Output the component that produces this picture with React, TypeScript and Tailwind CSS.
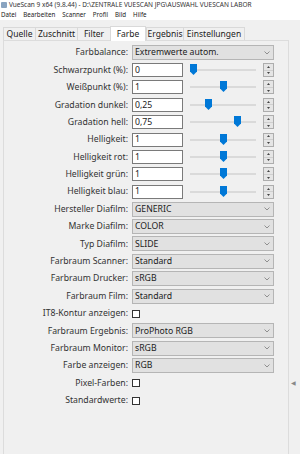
import React from "react";

type Row =
  | { kind: "dropdown"; label: string; value: string }
  | { kind: "slider"; label: string; value: string; pos: number }
  | { kind: "check"; label: string };

const rows: Row[] = [
  { kind: "dropdown", label: "Farbbalance:", value: "Extremwerte autom." },
  { kind: "slider", label: "Schwarzpunkt (%):", value: "0", pos: 3 },
  { kind: "slider", label: "Weißpunkt (%):", value: "1", pos: 33 },
  { kind: "slider", label: "Gradation dunkel:", value: "0,25", pos: 18 },
  { kind: "slider", label: "Gradation hell:", value: "0,75", pos: 47 },
  { kind: "slider", label: "Helligkeit:", value: "1", pos: 33 },
  { kind: "slider", label: "Helligkeit rot:", value: "1", pos: 33 },
  { kind: "slider", label: "Helligkeit grün:", value: "1", pos: 33 },
  { kind: "slider", label: "Helligkeit blau:", value: "1", pos: 33 },
  { kind: "dropdown", label: "Hersteller Diafilm:", value: "GENERIC" },
  { kind: "dropdown", label: "Marke Diafilm:", value: "COLOR" },
  { kind: "dropdown", label: "Typ Diafilm:", value: "SLIDE" },
  { kind: "dropdown", label: "Farbraum Scanner:", value: "Standard" },
  { kind: "dropdown", label: "Farbraum Drucker:", value: "sRGB" },
  { kind: "dropdown", label: "Farbraum Film:", value: "Standard" },
  { kind: "check", label: "IT8-Kontur anzeigen:" },
  { kind: "dropdown", label: "Farbraum Ergebnis:", value: "ProPhoto RGB" },
  { kind: "dropdown", label: "Farbraum Monitor:", value: "sRGB" },
  { kind: "dropdown", label: "Farbe anzeigen:", value: "RGB" },
  { kind: "check", label: "Pixel-Farben:" },
  { kind: "check", label: "Standardwerte:" },
];

function Chevron() {
  return (
    <svg width="6" height="4" viewBox="0 0 6 4" className="mr-[3px]">
      <path d="M0.5 0.5 L3 3 L5.5 0.5" fill="none" stroke="#7a7a7a" strokeWidth="0.8" />
    </svg>
  );
}

function Thumb() {
  return (
    <svg width="7" height="11" viewBox="0 0 7 11">
      <path d="M0 0 H7 V7.5 L3.5 11 L0 7.5 Z" fill="#0078d7" />
    </svg>
  );
}

function Spin() {
  return (
    <div className="flex h-[14px] w-[11px] flex-col border border-[#adadad] bg-[#e5e5e5]">
      <div className="flex flex-1 items-center justify-center border-b border-[#cfcfcf]">
        <svg width="3" height="2" viewBox="0 0 3 2">
          <path d="M0 2 L1.5 0 L3 2 Z" fill="#444" />
        </svg>
      </div>
      <div className="flex flex-1 items-center justify-center">
        <svg width="3" height="2" viewBox="0 0 3 2">
          <path d="M0 0 L1.5 2 L3 0 Z" fill="#444" />
        </svg>
      </div>
    </div>
  );
}

function RowView({ row }: { row: Row }) {
  return (
    <div className="flex h-[17.4px] items-center">
      <div className="w-[125px] pr-[1px] text-right text-[#333]">{row.label}</div>
      <div className="ml-[3px] flex items-center text-[#222]">
        {row.kind === "dropdown" && (
          <div className="flex h-[15px] w-[142px] items-center justify-between border border-[#b5b5b5] bg-[#e1e1e1] pl-[2px]">
            <span>{row.value}</span>
            <Chevron />
          </div>
        )}
        {row.kind === "slider" && (
          <>
            <div className="flex h-[14px] w-[51px] items-center border border-[#7a7a7a] bg-white pl-[2px]">
              {row.value}
            </div>
            <div className="relative h-[14px] w-[80px]">
              <div className="absolute left-[7px] top-[6px] h-[2px] w-[66px] bg-[#dadada]" />
              <div
                className="absolute top-[1px]"
                style={{ left: 7 + row.pos - 3.5 }}
              >
                <Thumb />
              </div>
            </div>
            <Spin />
          </>
        )}
        {row.kind === "check" && (
          <div className="h-[8px] w-[8px] border border-[#333] bg-white" />
        )}
      </div>
    </div>
  );
}

const tabs: { t: string; w: string }[] = [
  { t: "Quelle", w: "w-[32px]" },
  { t: "Zuschnitt", w: "w-[42px]" },
  { t: "Filter", w: "w-[33px]" },
  { t: "Farbe", w: "w-[36px]" },
  { t: "Ergebnis", w: "w-[37px]" },
  { t: "Einstellungen", w: "w-[62px]" },
];

export default function App() {
  return (
    <div
      className="relative h-[454px] w-[300px] overflow-hidden bg-[#f0f0f0] text-black"
      style={{ fontFamily: '"Noto Sans", "Open Sans", sans-serif' }}
    >
      <div className="flex h-[10px] items-center bg-white text-[6.5px] leading-none text-[#333]">
        <div className="ml-[1px] mr-[2px] h-[6px] w-[6px] rounded-[1px] bg-[#8aa4c0]" />
        <span>VueScan 9 x64 (9.8.44) - D:\ZENTRALE VUESCAN JPG\AUSWAHL VUESCAN LABOR</span>
      </div>
      <div className="flex h-[10px] items-center gap-[7px] bg-white pl-[1px] text-[6.2px] leading-none text-[#222]">
        <span>Datei</span>
        <span>Bearbeiten</span>
        <span>Scanner</span>
        <span>Profil</span>
        <span>Bild</span>
        <span>Hilfe</span>
      </div>
      <div className="ml-[3px] mt-[6px] flex h-[14px] items-end text-[8.5px] leading-none text-[#222]">
        {tabs.map((tab, i) => (
          <div
            key={tab.t}
            className={
              tab.t === "Farbe"
                ? "-mb-[1px] flex h-[15px] w-[36px] items-center justify-center border border-b-0 border-[#d9d9d9] bg-white"
                : "flex h-[13px] items-center justify-center whitespace-nowrap border-t border-l border-[#d9d9d9] bg-[#f0f0f0] " +
                  tab.w +
                  (i === tabs.length - 1 ? " border-r" : "")
            }
          >
            {tab.t}
          </div>
        ))}
      </div>
      <div className="ml-[3px] h-[420px] w-[286px] border border-[#dcdcdc] bg-[#f0f0f0] pt-[3px] text-[8.7px] leading-none">
        {rows.map((r) => (
          <RowView key={r.label} row={r} />
        ))}
      </div>
      <div className="absolute left-[291px] top-[379px] text-[6px] text-[#888]">◀</div>
    </div>
  );
}
